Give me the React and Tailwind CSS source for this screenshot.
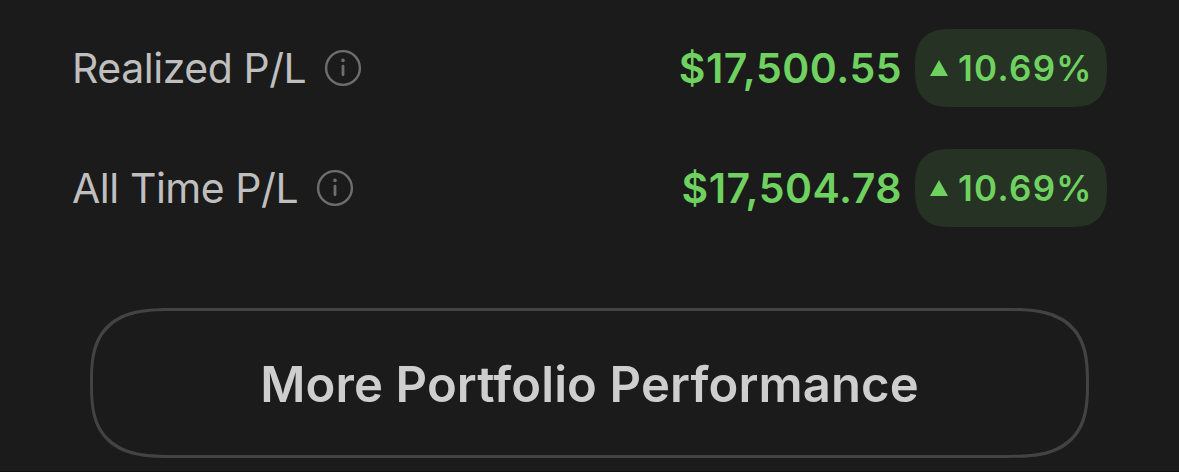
const rows = [
  { label: 'Realized P/L', value: '$17,500.55', percent: '10.69%' },
  { label: 'All Time P/L', value: '$17,504.78', percent: '10.69%' },
]

function InfoIcon() {
  return (
    <svg className="w-[38px] h-[38px] shrink-0" viewBox="0 0 38 38" fill="none">
      <circle cx="19" cy="19" r="16.9" stroke="#6e6e6e" strokeWidth="2.4" />
      <circle cx="19" cy="11.4" r="1.8" fill="#6e6e6e" />
      <path d="M19 17.2v8.6" stroke="#6e6e6e" strokeWidth="2.8" strokeLinecap="round" />
    </svg>
  )
}

function PercentBadge({ percent }) {
  return (
    <div className="flex items-center w-[192px] h-[78px] pl-[15px] rounded-[37px] [corner-shape:superellipse(1.4)] bg-[#263224]">
      <svg className="w-[18px] h-4 shrink-0" viewBox="0 0 18 16">
        <path d="M9 0l9 16H0z" fill="#6fd15f" />
      </svg>
      <span className="ml-2.5 pt-px text-[35px] font-semibold tracking-[1.3px] leading-none">{percent}</span>
    </div>
  )
}

export default function App() {
  return (
    <div className="h-[472px] pt-[29px] overflow-hidden border-b border-[#120e11] bg-[#1b1b1b] font-['Inter',sans-serif] whitespace-nowrap">
      <div className="flex flex-col gap-[42px] pl-[73px] pr-[72px]">
        {rows.map((row) => (
          <div key={row.label} className="flex items-center h-[78px]">
            <span className="-ml-px pt-px text-[41px] tracking-[-0.45px] leading-none text-[#bfbfbf]">{row.label}</span>
            <div className="ml-[18px]">
              <InfoIcon />
            </div>
            <div className="ml-auto flex items-center gap-[13px] text-[#6fd15f]">
              <span className="pt-px text-[41px] font-semibold tracking-[0.5px] leading-none">{row.value}</span>
              <PercentBadge percent={row.percent} />
            </div>
          </div>
        ))}
      </div>

      <button className="block mx-auto mt-[81px] w-[999px] h-[150px] pt-0.5 rounded-[82px/75px] [corner-shape:superellipse(1.5)] border-3 border-[#434343] text-[49px] font-semibold tracking-[0.12px] leading-none text-[#cecece]">
        More Portfolio Performance
      </button>
    </div>
  )
}
